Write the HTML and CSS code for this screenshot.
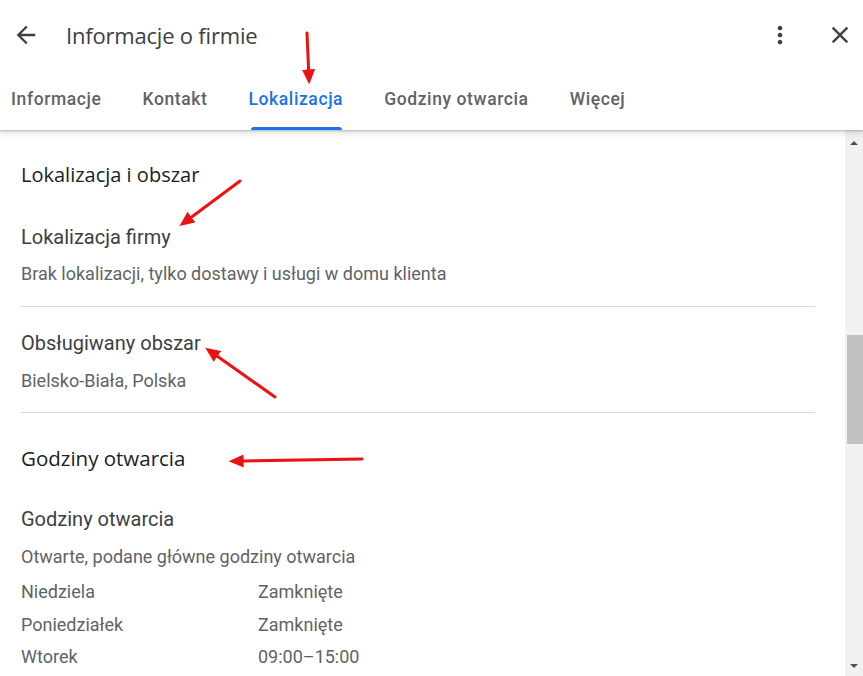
FILE: index.html
```html
<!DOCTYPE html>
<html lang="pl">
<head>
<meta charset="utf-8">
<title>Informacje o firmie</title>
<link rel="stylesheet" href="styles.css">
</head>
<body>
<div class="app">
  <header class="topbar">
    <div class="titlebar">
      <button class="icon-btn back" aria-label="Wstecz">
        <svg viewBox="0 0 24 24" width="28" height="28"><path d="M20 11H7.83l5.59-5.59L12 4l-8 8 8 8 1.41-1.41L7.83 13H20v-2z"/></svg>
      </button>
      <h1 class="title">Informacje o firmie</h1>
      <div class="spacer"></div>
      <button class="icon-btn more" aria-label="Więcej opcji">
        <svg viewBox="0 0 24 24" width="28" height="28"><path d="M12 8c1.1 0 2-.9 2-2s-.9-2-2-2-2 .9-2 2 .9 2 2 2zm0 2c-1.1 0-2 .9-2 2s.9 2 2 2 2-.9 2-2-.9-2-2-2zm0 6c-1.1 0-2 .9-2 2s.9 2 2 2 2-.9 2-2-.9-2-2-2z"/></svg>
      </button>
      <button class="icon-btn close" aria-label="Zamknij">
        <svg viewBox="0 0 24 24" width="28" height="28"><path d="M19 6.41L17.59 5 12 10.59 6.41 5 5 6.41 10.59 12 5 17.59 6.41 19 12 13.41 17.59 19 19 17.59 13.41 12z"/></svg>
      </button>
    </div>
    <nav class="tabs">
      <span class="tab">Informacje</span>
      <span class="tab">Kontakt</span>
      <span class="tab active">Lokalizacja</span>
      <span class="tab">Godziny otwarcia</span>
      <span class="tab">Więcej</span>
    </nav>
  </header>

  <div class="body">
    <main class="content">
      <div class="divider top"></div>
      <h2 class="section-title first">Lokalizacja i obszar</h2>
      <div class="item first">
        <div class="label">Lokalizacja firmy</div>
        <div class="value">Brak lokalizacji, tylko dostawy i usługi w domu klienta</div>
      </div>
      <div class="divider"></div>
      <div class="item second">
        <div class="label">Obsługiwany obszar</div>
        <div class="value">Bielsko-Biała, Polska</div>
      </div>
      <div class="divider"></div>
      <h2 class="section-title">Godziny otwarcia</h2>
      <div class="item hours">
        <div class="label">Godziny otwarcia</div>
        <div class="value">Otwarte, podane główne godziny otwarcia</div>
        <div class="schedule">
          <span>Niedziela</span><span>Zamknięte</span>
          <span>Poniedziałek</span><span>Zamknięte</span>
          <span>Wtorek</span><span>09:00–15:00</span>
        </div>
      </div>
    </main>
    <div class="scrollbar">
      <div class="sb-arrow up"></div>
      <div class="sb-thumb"></div>
      <div class="sb-fill"></div>
      <div class="sb-arrow down"></div>
    </div>
  </div>

  <svg class="annotations" width="863" height="676" viewBox="0 0 863 676">
    <defs>
      <marker id="head" markerWidth="5" markerHeight="4.4" refX="0.2" refY="2.2" orient="auto" markerUnits="strokeWidth">
        <path d="M0 0 L5 2.2 L0 4.4 z" fill="#ee1111"/>
      </marker>
    </defs>
    <g stroke="#ee1111" stroke-width="3" stroke-linecap="round" fill="none" marker-end="url(#head)">
      <line x1="307" y1="33" x2="308.6" y2="70"/>
      <line x1="240" y1="181" x2="191" y2="217.5"/>
      <line x1="275" y1="397" x2="217" y2="356"/>
      <line x1="362" y1="459" x2="243" y2="461"/>
    </g>
  </svg>
</div>
</body>
</html>
```

FILE: styles.css
```css
* { box-sizing: border-box; }

html, body {
  margin: 0;
  padding: 0;
  background: #ffffff;
  font-family: Roboto, "Noto Sans", "Liberation Sans", Arial, sans-serif;
  color: #3c4043;
  overflow: hidden;
}

.app {
  position: relative;
  width: 863px;
  height: 676px;
  display: flex;
  flex-direction: column;
  overflow: hidden;
  background: #fff;
}

/* ---------- header ---------- */
.topbar {
  position: relative;
  z-index: 2;
  height: 130px;
  flex: none;
  background: #fff;
  box-shadow: 0 1px 2px rgba(60, 64, 67, 0.30), 0 2px 6px 2px rgba(60, 64, 67, 0.12);
}

.titlebar {
  height: 70px;
  display: flex;
  align-items: center;
  padding: 0 9px 0 12px;
}

.icon-btn {
  border: 0;
  background: none;
  padding: 0;
  width: 28px;
  height: 28px;
  display: flex;
  align-items: center;
  justify-content: center;
  fill: #3c4043;
}
.icon-btn svg { display: block; }
.icon-btn.more { margin-right: 32px; }

.title {
  margin: 0 0 0 26px;
  font-family: "Open Sans", Roboto, sans-serif;
  font-weight: 400;
  font-size: 22px;
  letter-spacing: -0.2px;
  color: #3c4043;
  line-height: 28px;
}

.spacer { flex: 1; }

.tabs {
  height: 60px;
  display: flex;
  align-items: stretch;
  padding-left: 11px;
  gap: 41px;
}

.tab {
  position: relative;
  display: flex;
  align-items: center;
  padding-bottom: 2px;
  font-family: Roboto, "Open Sans", sans-serif;
  font-weight: 500;
  font-size: 17.5px;
  letter-spacing: 0.6px;
  color: #5f6368;
}

.tab.active { color: #1a73e8; }
.tab.active::after {
  content: "";
  position: absolute;
  left: 2px;
  right: 1px;
  bottom: 0;
  height: 3px;
  border-radius: 3px 3px 0 0;
  background: #1a73e8;
}

/* ---------- body ---------- */
.body {
  flex: 1;
  display: flex;
  min-height: 0;
}

.content {
  flex: 1;
  padding: 0 30px 0 21px;
  overflow: hidden;
}

.divider {
  height: 1px;
  background: #dadce0;
}
.divider.top { margin-top: -1px; }

.section-title {
  margin: 33px 0 0;
  font-family: "Open Sans", Roboto, sans-serif;
  font-weight: 500;
  font-size: 20.5px;
  line-height: 24px;
  color: #202124;
}
.section-title.first { margin-top: 33px; font-size: 20px; }

.item {
  padding: 39px 0 20px;
}
.item.first { padding-top: 38px; }
.item.second { padding: 24px 0 19px; }
.item.hours { padding: 37px 0 0; }

.label {
  font-size: 20px;
  line-height: 24px;
  color: #3c4043;
}

.value {
  margin-top: 13px;
  font-size: 18px;
  line-height: 24px;
  color: #5f6368;
}
.item.second .value { margin-top: 14px; }
.item.hours .value { margin-top: 14px; }

.schedule {
  margin-top: 7px;
  display: grid;
  grid-template-columns: 237px 1fr;
  grid-auto-rows: 32.5px;
  align-items: center;
  font-size: 18px;
  line-height: 24px;
  color: #5f6368;
}

/* ---------- scrollbar ---------- */
.scrollbar {
  width: 18px;
  flex: none;
  background: #f1f1f1;
  display: flex;
  flex-direction: column;
  align-items: flex-end;
}

.sb-arrow {
  width: 100%;
  height: 17px;
  display: flex;
  justify-content: center;
  align-items: center;
  flex: none;
}
.sb-arrow::before {
  content: "";
  width: 0;
  height: 0;
  border-left: 4px solid transparent;
  border-right: 4px solid transparent;
}
.sb-arrow.up::before { border-bottom: 4px solid #505050; margin-top: 8px; }
.sb-arrow.down::before { border-top: 4px solid #505050; margin-bottom: 4px; }

.sb-thumb {
  width: 16px;
  height: 109px;
  margin-top: 188px;
  background: #c1c1c1;
  flex: none;
}
.sb-fill { flex: 1; }

/* ---------- annotation overlay ---------- */
.annotations {
  position: absolute;
  left: 0;
  top: 0;
  z-index: 5;
  pointer-events: none;
}
```
